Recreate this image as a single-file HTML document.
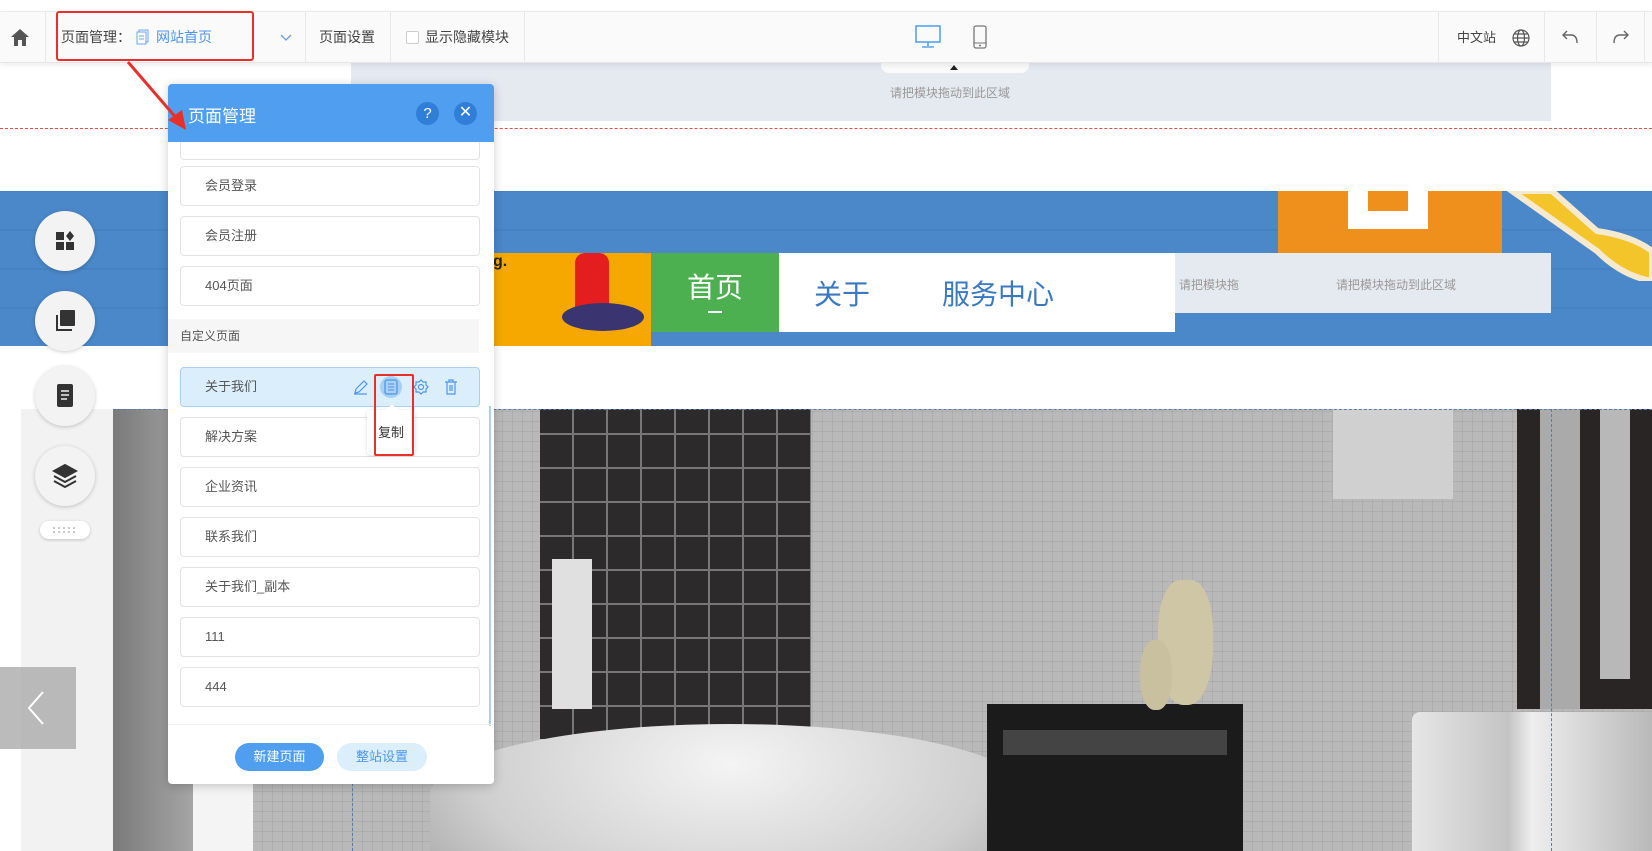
<!DOCTYPE html>
<html style="overflow:hidden;width:1652px;height:851px"><head><meta charset="utf-8"><style>
*{margin:0;padding:0;box-sizing:border-box}
body{width:1652px;height:851px;overflow:hidden;position:relative;background:#fff;font-family:"Liberation Sans","Noto Sans CJK SC",sans-serif;color:#333}
.a{position:absolute}
.tb{top:12px;height:51px;left:0;width:1652px;background:#fafafa;border-bottom:1px solid #e6e6e6;box-shadow:0 2px 6px rgba(0,0,0,.08);z-index:5}
.t{font-size:14px;color:#444;line-height:51px;top:0}
.dv{top:0;width:1px;height:51px;background:#e8e8e8}
.item{left:180px;width:300px;height:40px;border:1px solid #e3e3e3;border-radius:4px;background:#fff;font-size:13px;color:#555;line-height:38px;padding-left:24px}
.circ{width:60px;height:60px;border-radius:50%;background:#f3f3f3;box-shadow:0 1px 4px rgba(0,0,0,.2);left:35px}
</style></head><body>
<div class="a" style="top:0;left:0;width:1652px;height:12px;background:#fff;border-bottom:1px solid #eee"></div>
<div class="a tb">
 <svg class="a" style="left:10px;top:16px" width="20" height="19" viewBox="0 0 20 19"><path d="M10 1L1 9h3v9h4v-6h4v6h4V9h3z" fill="#555"/></svg>
 <div class="a dv" style="left:45px"></div>
 <div class="a t" style="left:61px">页面管理：</div>
 <svg class="a" style="left:136px;top:17px" width="13" height="16" viewBox="0 0 13 16"><rect x="3" y="1" width="9" height="12" fill="none" stroke="#6aa8ee"/><rect x="1" y="3" width="9" height="12" fill="#fafafa" stroke="#6aa8ee"/><path d="M3 7h5M3 10h5" stroke="#6aa8ee"/></svg>
 <div class="a t" style="left:156px;color:#4d96ea">网站首页</div>
 <svg class="a" style="left:280px;top:22px" width="12" height="8"><path d="M1 1l5 5 5-5" fill="none" stroke="#6b9ed8" stroke-width="1.3"/></svg>
 <div class="a dv" style="left:305px"></div>
 <div class="a t" style="left:319px">页面设置</div>
 <div class="a dv" style="left:390px"></div>
 <div class="a" style="left:406px;top:19px;width:13px;height:13px;border:1px solid #ccc;background:#fff;border-radius:2px"></div>
 <div class="a t" style="left:425px">显示隐藏模块</div>
 <div class="a dv" style="left:524px"></div>
 <svg class="a" style="left:915px;top:13px" width="26" height="24" viewBox="0 0 26 24"><rect x="1" y="1" width="24" height="16" fill="none" stroke="#5aa2ee" stroke-width="1.6"/><path d="M13 17v4M7 22h12" stroke="#5aa2ee" stroke-width="1.6"/></svg>
 <svg class="a" style="left:973px;top:13px" width="14" height="24" viewBox="0 0 14 24"><rect x="1" y="1" width="12" height="22" rx="2" fill="none" stroke="#777" stroke-width="1.3"/><path d="M1 18h12" stroke="#777"/><circle cx="7" cy="20.5" r="1" fill="#777"/></svg>
 <div class="a dv" style="left:1438px"></div>
 <div class="a t" style="left:1457px;font-size:13px">中文站</div>
 <svg class="a" style="left:1512px;top:17px" width="18" height="18" viewBox="0 0 18 18" fill="none" stroke="#555" stroke-width="1.2"><circle cx="9" cy="9" r="8"/><ellipse cx="9" cy="9" rx="3.5" ry="8"/><path d="M1 9h16M2.5 5h13M2.5 13h13"/></svg>
 <div class="a dv" style="left:1544px"></div>
 <svg class="a" style="left:1561px;top:17px" width="18" height="16" viewBox="0 0 18 16"><path d="M6 2L2 6l4 4M2 6h8c4 0 6 3 6 8" fill="none" stroke="#666" stroke-width="1.4"/></svg>
 <div class="a dv" style="left:1596px"></div>
 <svg class="a" style="left:1612px;top:17px" width="18" height="16" viewBox="0 0 18 16"><path d="M12 2l4 4-4 4M16 6H8c-4 0-6 3-6 8" fill="none" stroke="#666" stroke-width="1.4"/></svg>
 <div class="a dv" style="left:1644px"></div>
</div>
<div class="a" style="left:56px;top:11px;width:198px;height:50px;border:2px solid #e8302a;border-radius:3px;z-index:6"></div>
<div class="a" style="left:351px;top:63px;width:1200px;height:58px;background:#e5e9f0"></div>
<div class="a" style="left:881px;top:63px;width:148px;height:10px;background:#fafafa;border-radius:0 0 8px 8px"></div>
<div class="a" style="left:950px;top:65px;width:0;height:0;border-left:4px solid transparent;border-right:4px solid transparent;border-bottom:5px solid #222"></div>
<div class="a" style="left:890px;top:84px;font-size:12px;color:#999">请把模块拖动到此区域</div>
<div class="a" style="left:0;top:128px;width:1652px;border-top:1px dashed #e0504a"></div>
<!-- banner -->
<div class="a" style="left:0;top:191px;width:1652px;height:155px;background:#4a88c9;background-image:repeating-linear-gradient(0deg,transparent 0 37px,rgba(40,90,150,.12) 37px 39px)"></div>
<div class="a" style="left:1278px;top:191px;width:224px;height:62px;background:#f0901c"></div>
<div class="a" style="left:1348px;top:191px;width:80px;height:38px;background:#fff"></div>
<div class="a" style="left:1368px;top:191px;width:40px;height:20px;background:#f0901c"></div>
<svg class="a" style="left:1502px;top:191px" width="150" height="90"><path d="M10 0 L50 0 L95 40 Q130 45 150 60 L150 90 Q120 85 95 60 Z" fill="#f3c52a" stroke="#f5ead0" stroke-width="6"/></svg>
<div class="a" style="left:422px;top:253px;width:229px;height:93px;background:#f6a800"></div>
<div class="a" style="left:493px;top:253px;font-size:16px;font-weight:bold;color:#222">g.</div>
<div class="a" style="left:575px;top:253px;width:34px;height:62px;background:#e41e1e;border-radius:10px 10px 4px 4px"></div>
<div class="a" style="left:562px;top:303px;width:82px;height:28px;background:#3a3570;border-radius:50%"></div>
<div class="a" style="left:651px;top:253px;width:128px;height:79px;background:#4caf50;color:#fff;font-size:28px;text-align:center;line-height:70px">首页</div>
<div class="a" style="left:708px;top:311px;width:14px;height:2px;background:#fff"></div>
<div class="a" style="left:779px;top:253px;width:396px;height:79px;background:#fff"></div>
<div class="a" style="left:814px;top:273px;font-size:28px;color:#3a78c0">关于</div>
<div class="a" style="left:942px;top:273px;font-size:28px;color:#3a78c0">服务中心</div>
<div class="a" style="left:1175px;top:253px;width:376px;height:60px;background:#e5e9f0"></div>
<div class="a" style="left:1179px;top:276px;font-size:12px;color:#999">请把模块拖</div>
<div class="a" style="left:1336px;top:276px;font-size:12px;color:#999">请把模块拖动到此区域</div>
<!-- photo -->
<div class="a" style="left:0;top:409px;width:1652px;height:442px;overflow:hidden">
<div class="a" style="left:21px;top:0;width:92px;height:442px;background:#f2f2f2"></div>
<div class="a" style="left:113px;top:0;width:1539px;height:442px;background:#b9b9b9;background-image:repeating-linear-gradient(90deg,transparent 0 9px,rgba(0,0,0,.06) 9px 10px),repeating-linear-gradient(0deg,transparent 0 9px,rgba(0,0,0,.06) 9px 10px)"></div>
<div class="a" style="left:113px;top:0;width:80px;height:442px;background:linear-gradient(90deg,#7a7a7a,#a5a5a5)"></div>
<div class="a" style="left:193px;top:0;width:60px;height:442px;background:#f4f4f4"></div>
<div class="a" style="left:540px;top:0;width:271px;height:330px;background:#2c2a2a;background-image:repeating-linear-gradient(90deg,transparent 0 32px,#777 32px 34px),repeating-linear-gradient(0deg,transparent 0 32px,#777 32px 34px)"></div>
<div class="a" style="left:552px;top:150px;width:40px;height:150px;background:#e0e0e0"></div>
<div class="a" style="left:430px;top:315px;width:600px;height:200px;background:radial-gradient(ellipse at 50% 20%,#f4f4f4,#cfcfcf 60%,#9a9a9a);border-radius:50% 50% 0 0/35% 35% 0 0"></div>
<div class="a" style="left:1333px;top:0;width:120px;height:90px;background:#d0d0d0"></div>
<div class="a" style="left:1517px;top:0;width:135px;height:300px;background:#2a2525"></div>
<div class="a" style="left:1540px;top:0;width:40px;height:300px;background:#aaa"></div>
<div class="a" style="left:1600px;top:0;width:30px;height:270px;background:#b8b8b8"></div>
<div class="a" style="left:987px;top:295px;width:256px;height:147px;background:#1b1b1b"></div>
<div class="a" style="left:1003px;top:321px;width:224px;height:25px;background:#444"></div>
<div class="a" style="left:1158px;top:171px;width:55px;height:125px;background:#cfc6a6;border-radius:40% 40% 45% 45%"></div>
<div class="a" style="left:1140px;top:231px;width:32px;height:70px;background:#c9c0a0;border-radius:45%"></div>
<div class="a" style="left:1412px;top:303px;width:240px;height:139px;background:linear-gradient(90deg,#e6e6e6,#c4c4c4 40%,#eee 50%,#b9b9b9);border-radius:8px 8px 0 0"></div>
<div class="a" style="left:113px;top:0;width:1539px;border-top:1px dashed #5a7ab0"></div>
<div class="a" style="left:352px;top:0;height:442px;border-left:1px dashed #5a7ab0"></div>
<div class="a" style="left:1551px;top:0;height:442px;border-left:1px dashed #5a7ab0"></div>
</div>
<div class="a" style="left:0;top:667px;width:76px;height:82px;background:rgba(170,170,170,.8)"></div>
<svg class="a" style="left:26px;top:690px" width="20" height="36"><path d="M17 2L3 18l14 16" fill="none" stroke="#fff" stroke-width="2"/></svg>
<div class="a circ" style="top:211px"><svg class="a" style="left:20px;top:20px" width="20" height="20"><rect x="1" y="1" width="8" height="8" fill="#333"/><rect x="1" y="11" width="8" height="8" fill="#333"/><rect x="11" y="11" width="8" height="8" fill="#333"/><path d="M15 0l4 5-4 5-4-5z" fill="#333"/></svg></div>
<div class="a circ" style="top:291px"><svg class="a" style="left:19px;top:18px" width="22" height="24"><rect x="6" y="1" width="15" height="16" rx="1" fill="#333"/><path d="M3 6v15h15" fill="none" stroke="#333" stroke-width="2"/></svg></div>
<div class="a circ" style="top:366px"><svg class="a" style="left:21px;top:17px" width="18" height="25"><rect x="1" y="1" width="16" height="23" rx="2" fill="#333"/><path d="M5 8h8M5 12h8M5 16h6" stroke="#eee" stroke-width="1.5"/></svg></div>
<div class="a circ" style="top:446px"><svg class="a" style="left:17px;top:17px" width="26" height="26" fill="none" stroke="#333" stroke-width="2"><path d="M13 2l11 6-11 6L2 8z" fill="#333"/><path d="M2 13l11 6 11-6M2 18l11 6 11-6"/></svg></div>
<div class="a" style="left:40px;top:521px;width:50px;height:18px;background:#fff;border-radius:9px;box-shadow:0 1px 3px rgba(0,0,0,.2)"><svg class="a" style="left:13px;top:6px" width="24" height="6"><g fill="#888"><circle cx="1" cy="1" r=".8"/><circle cx="6" cy="1" r=".8"/><circle cx="11" cy="1" r=".8"/><circle cx="16" cy="1" r=".8"/><circle cx="21" cy="1" r=".8"/><circle cx="1" cy="5" r=".8"/><circle cx="6" cy="5" r=".8"/><circle cx="11" cy="5" r=".8"/><circle cx="16" cy="5" r=".8"/><circle cx="21" cy="5" r=".8"/></g></svg></div>
<svg class="a" style="left:120px;top:58px;z-index:7" width="80" height="80"><path d="M8 4L58 62" stroke="#e8302a" stroke-width="3"/><path d="M66 72L48 62l14-10z" fill="#e8302a"/></svg>
<div class="a" style="left:168px;top:84px;width:326px;height:700px;background:#fff;border-radius:4px;box-shadow:0 2px 10px rgba(0,0,0,.2);overflow:hidden;z-index:4">
 <div class="a" style="left:0;top:0;width:326px;height:58px;background:#4f9ef0"></div>
 <div class="a" style="left:20px;top:18px;font-size:17px;color:#fff">页面管理</div>
 <div class="a" style="left:248px;top:18px;width:23px;height:23px;border-radius:50%;background:#2f7fd8;color:#fff;font-size:15px;text-align:center;line-height:23px">?</div>
 <div class="a" style="left:286px;top:18px;width:23px;height:23px;border-radius:50%;background:#2f7fd8;color:#fff;font-size:16px;text-align:center;line-height:22px">✕</div>
</div>
<div class="a" style="left:180px;top:142px;width:300px;height:18px;border:1px solid #e3e3e3;border-top:none;border-radius:0 0 4px 4px;z-index:4"></div>
<div class="a item" style="top:166px;z-index:4">会员登录</div>
<div class="a item" style="top:216px;z-index:4">会员注册</div>
<div class="a item" style="top:266px;z-index:4">404页面</div>
<div class="a" style="left:168px;top:319px;width:311px;height:34px;background:#f6f6f6;font-size:12px;color:#555;line-height:34px;padding-left:12px;z-index:4">自定义页面</div>
<div class="a item" style="top:367px;background:#dbeefc;border-color:#a9cff2;z-index:4">关于我们
 <svg class="a" style="left:172px;top:11px" width="16" height="16"><path d="M2 14l1-4 8-8 3 3-8 8z M1 15h13" fill="none" stroke="#4d96ea" stroke-width="1.2"/></svg>
 <div class="a" style="left:199px;top:8px;width:22px;height:22px;border-radius:50%;background:#a9cff4"></div>
 <svg class="a" style="left:203px;top:11px" width="14" height="16"><rect x="1" y="1" width="12" height="14" rx="2" fill="none" stroke="#4d96ea" stroke-width="1.3"/><path d="M4 5h6M4 8h6M4 11h6" stroke="#4d96ea"/></svg>
 <svg class="a" style="left:232px;top:11px" width="16" height="16"><circle cx="8" cy="8" r="2.5" fill="none" stroke="#4d96ea" stroke-width="1.2"/><path d="M8 1l2 2 3 0 0 3 2 2-2 2 0 3-3 0-2 2-2-2-3 0 0-3-2-2 2-2 0-3 3 0z" fill="none" stroke="#4d96ea" stroke-width="1.2"/></svg>
 <svg class="a" style="left:263px;top:11px" width="14" height="16"><path d="M1 3h12M5 3V1h4v2M3 3v12h8V3M6 6v6M8 6v6" fill="none" stroke="#4d96ea" stroke-width="1.2"/></svg>
</div>
<div class="a item" style="top:417px;z-index:4">解决方案</div>
<div class="a item" style="top:467px;z-index:4">企业资讯</div>
<div class="a item" style="top:517px;z-index:4">联系我们</div>
<div class="a item" style="top:567px;z-index:4">关于我们_副本</div>
<div class="a item" style="top:617px;z-index:4">111</div>
<div class="a item" style="top:667px;z-index:4">444</div>
<div class="a" style="left:489px;top:406px;width:2px;height:320px;background:#a9cff4;z-index:4"></div>
<div class="a" style="left:168px;top:724px;width:326px;border-top:1px solid #eee;z-index:4"></div>
<div class="a" style="left:235px;top:743px;width:89px;height:28px;border-radius:14px;background:#4f9ef0;color:#fff;font-size:13px;text-align:center;line-height:28px;z-index:4">新建页面</div>
<div class="a" style="left:337px;top:743px;width:90px;height:28px;border-radius:14px;background:#dbeefc;color:#4d96ea;font-size:13px;text-align:center;line-height:28px;z-index:4">整站设置</div>
<div class="a" style="left:367px;top:410px;width:48px;height:45px;background:#fff;border-radius:4px;box-shadow:0 1px 4px rgba(0,0,0,.15);font-size:13px;color:#333;text-align:center;line-height:45px;z-index:5">复制</div>
<div class="a" style="left:386px;top:404px;width:0;height:0;border-left:6px solid transparent;border-right:6px solid transparent;border-bottom:6px solid #fff;z-index:5"></div>
<div class="a" style="left:374px;top:374px;width:40px;height:82px;border:2px solid #e8302a;border-radius:2px;z-index:6"></div>
</body></html>
